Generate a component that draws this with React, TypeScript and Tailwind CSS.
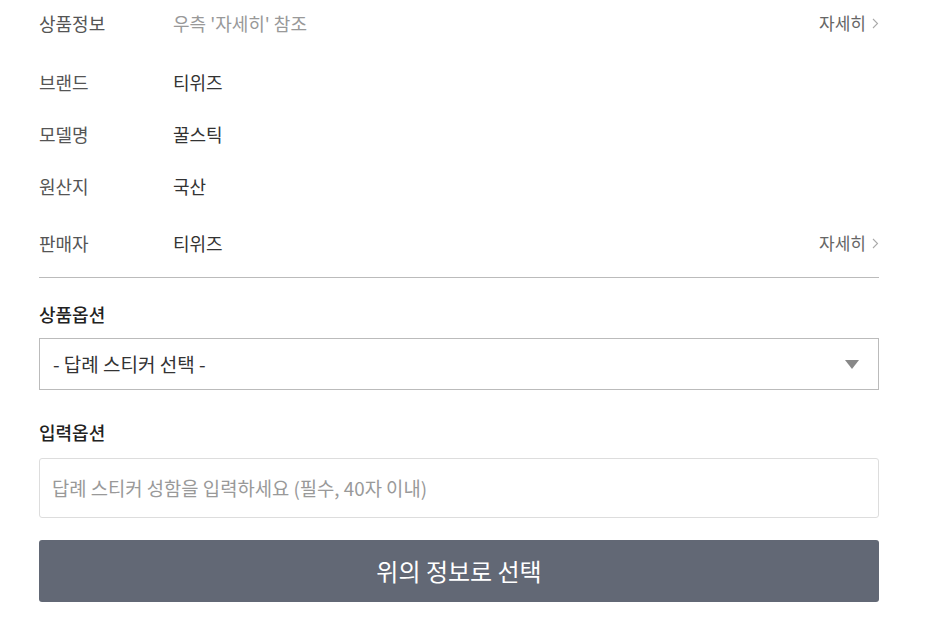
import React from "react";

const Chevron = () => (
  <svg width="7" height="11" viewBox="0 0 7 11" className="ml-[6px]" fill="none">
    <path d="M1 1 L5.5 5.5 L1 10" stroke="#aaaaaa" strokeWidth="1.1" />
  </svg>
);

const Detail = () => (
  <div className="flex items-center text-[17px] text-[#666666]">
    <span>자세히</span>
    <Chevron />
  </div>
);

function Row({
  label,
  value,
  valueClass,
  h,
  mt,
  link,
}: {
  label: string;
  value: string;
  valueClass?: string;
  h: string;
  mt?: string;
  link?: boolean;
}) {
  return (
    <div className={`flex items-center ${h} ${mt ?? ""}`}>
      <div className="w-[134px] text-[#555555]">{label}</div>
      <div className={`flex-1 ${valueClass ?? "text-[#333333]"}`}>{value}</div>
      {link && <Detail />}
    </div>
  );
}

export default function App() {
  return (
    <div
      className="w-[952px] h-[622px] bg-white overflow-hidden"
      style={{ fontFamily: '"Noto Sans CJK KR", "Noto Sans", sans-serif' }}
    >
      <div className="mx-[39px] w-[840px] text-[18px] leading-[24px]">
        <Row label="상품정보" value="우측 '자세히' 참조" valueClass="text-[#999999]" h="h-[46px]" link />
        <Row label="브랜드" value="티위즈" h="h-[52px]" mt="mt-[10px]" />
        <Row label="모델명" value="꿀스틱" h="h-[52px]" />
        <Row label="원산지" value="국산" h="h-[52px]" />
        <Row label="판매자" value="티위즈" h="h-[52px]" mt="mt-[5px]" link />
        <div className="mt-[8px] h-px bg-[#bbbbbb]" />

        <div className="mt-[24px] font-medium text-[#222222]">상품옵션</div>
        <div className="mt-[12px] h-[52px] border border-[#bbbbbb] flex items-center justify-between pl-[13px] pr-[19px] text-[#333333] text-[19px]">
          <span>- 답례 스티커 선택 -</span>
          <svg width="14" height="9" viewBox="0 0 14 9">
            <path d="M0 0 H14 L7 9 Z" fill="#888888" />
          </svg>
        </div>

        <div className="mt-[30px] font-medium text-[#222222]">입력옵션</div>
        <div className="mt-[14px] h-[60px] border border-[#dddddd] rounded-[3px] flex items-center pl-[12px] text-[#999999] text-[18.8px]">
          답례 스티커 성함을 입력하세요 (필수, 40자 이내)
        </div>

        <div className="mt-[22px] h-[62px] rounded-[3px] bg-[#626875] flex items-center justify-center text-white text-[24px]">
          위의 정보로 선택
        </div>
      </div>
    </div>
  );
}
